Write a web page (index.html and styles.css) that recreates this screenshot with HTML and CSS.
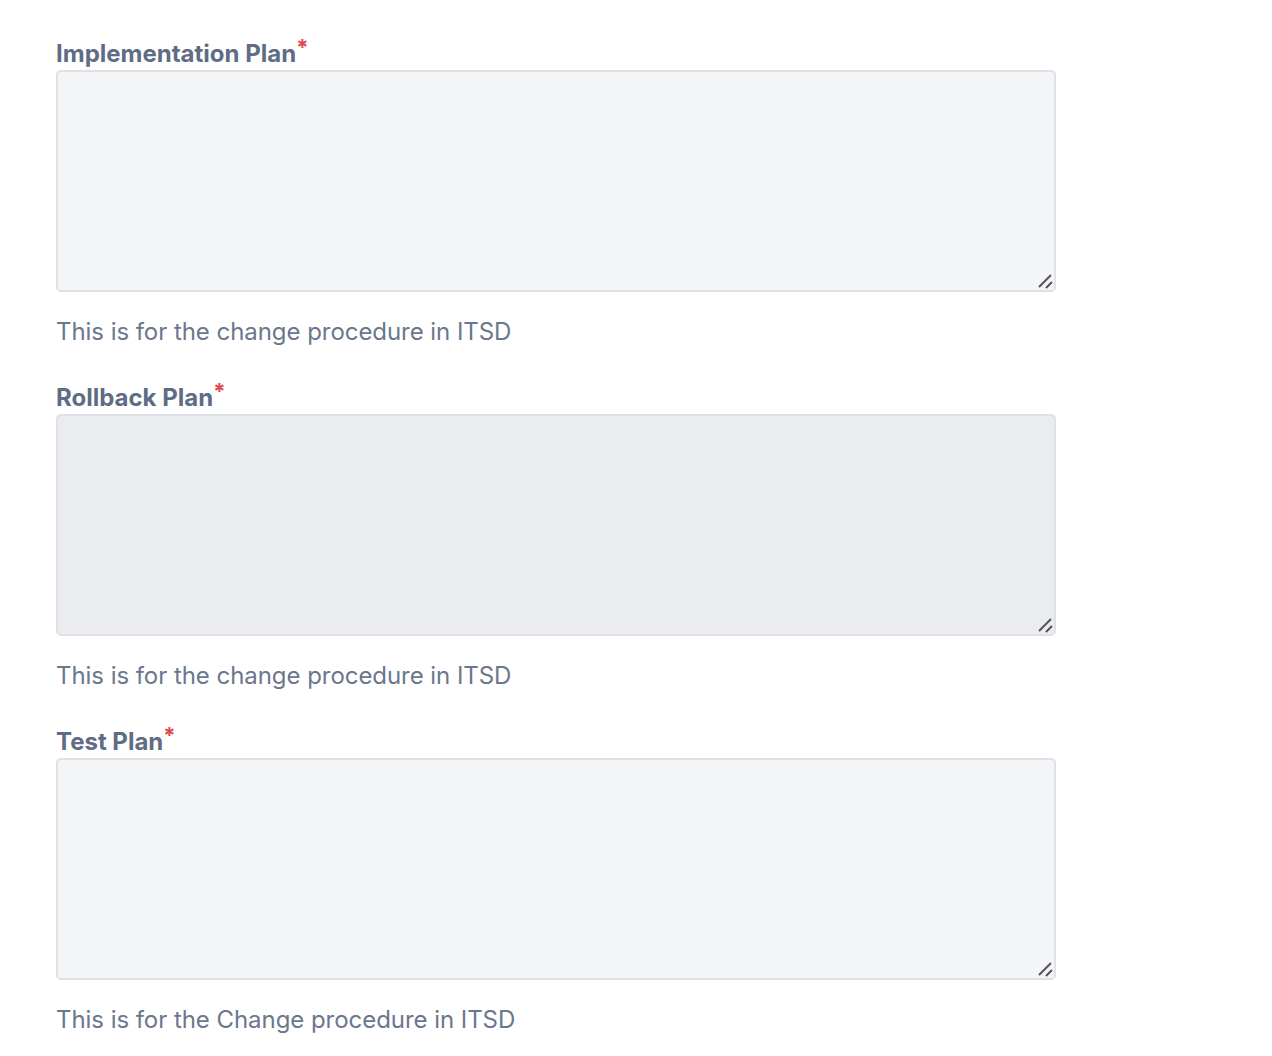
FILE: index.html
```html
<!DOCTYPE html>
<html>
<head>
<meta charset="utf-8">
<link rel="stylesheet" href="styles.css">
</head>
<body>
<div class="form">
  <div class="field">
    <label class="label">Implementation Plan<span class="req">*</span></label>
    <div class="box">
      <textarea class="input"></textarea>
      <svg class="grip" width="16" height="16" viewBox="0 0 16 16"><path d="M2 14 L14 2 M9 15 L15 9" stroke="#555" stroke-width="2" fill="none"/></svg>
    </div>
    <div class="help">This is for the change procedure in ITSD</div>
  </div>
  <div class="field">
    <label class="label">Rollback Plan<span class="req">*</span></label>
    <div class="box">
      <textarea class="input hover"></textarea>
      <svg class="grip" width="16" height="16" viewBox="0 0 16 16"><path d="M2 14 L14 2 M9 15 L15 9" stroke="#555" stroke-width="2" fill="none"/></svg>
    </div>
    <div class="help">This is for the change procedure in ITSD</div>
  </div>
  <div class="field">
    <label class="label">Test Plan<span class="req">*</span></label>
    <div class="box">
      <textarea class="input"></textarea>
      <svg class="grip" width="16" height="16" viewBox="0 0 16 16"><path d="M2 14 L14 2 M9 15 L15 9" stroke="#555" stroke-width="2" fill="none"/></svg>
    </div>
    <div class="help">This is for the Change procedure in ITSD</div>
  </div>
</div>
</body>
</html>
```
FILE: styles.css
```css
html, body {
  margin: 0;
  padding: 0;
  background: #ffffff;
}
body {
  font-family: Inter, "Noto Sans", sans-serif;
}
.form {
  padding: 38px 0 0 56px;
  display: flex;
  flex-direction: column;
  gap: 36px;
  width: 1000px;
}
.field {
  display: flex;
  flex-direction: column;
}
.label {
  font-size: 24px;
  line-height: 28px;
  font-weight: 700;
  color: #5e6c84;
  padding-top: 2px;
  margin-bottom: 2px;
}
.req {
  color: #e0474c;
  font-size: 22px;
  font-weight: 700;
  vertical-align: top;
  position: relative;
  top: -7px;
  margin-left: 0;
}
.box {
  position: relative;
  width: 1000px;
  height: 222px;
}
.input {
  display: block;
  box-sizing: border-box;
  width: 1000px;
  height: 222px;
  margin: 0;
  background: #f4f5f7;
  border: 2px solid #dfe1e6;
  border-radius: 5px;
  resize: none;
  font-family: inherit;
  font-size: 24px;
  outline: none;
}
.input.hover {
  background: #ebecf0;
}
.grip {
  position: absolute;
  right: 3px;
  bottom: 3px;
}
.help {
  margin-top: 26px;
  font-size: 24px;
  line-height: 28px;
  color: #6b778c;
  letter-spacing: -0.05px;
}
```
